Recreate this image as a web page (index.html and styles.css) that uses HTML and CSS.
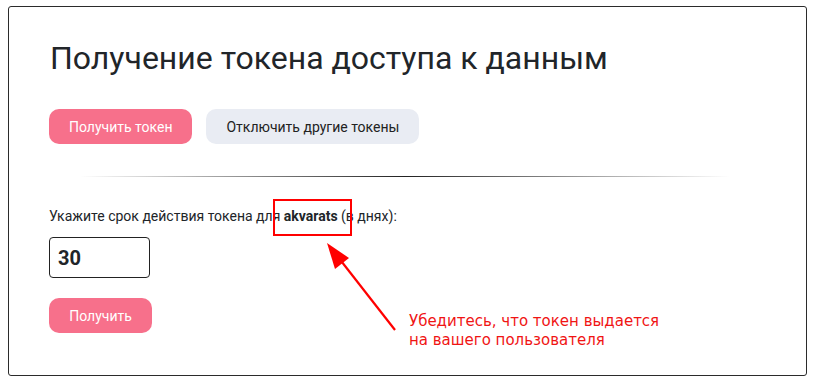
FILE: index.html
```html
<!DOCTYPE html>
<html lang="ru">
<head>
  <meta charset="UTF-8">
  <meta name="viewport" content="width=device-width, initial-scale=1.0">
  <title>Получение токена</title>
  <link rel="stylesheet" href="styles.css">
</head>
<body>
  <div class="card">
    <h1 class="title">Получение токена доступа к данным</h1>

    <div class="actions">
      <button class="btn btn-primary">Получить токен</button>
      <button class="btn btn-light">Отключить другие токены</button>
    </div>

    <hr class="divider">

    <form class="token-form">
      <label class="hint" for="days">Укажите срок действия токена для <b>akvarats</b> (в днях):</label>
      <input id="days" class="days-input" type="text" value="30">
      <button class="btn btn-primary btn-small" type="button">Получить</button>
    </form>

    <div class="mark-box"></div>
    <svg class="mark-arrow" width="90" height="100" viewBox="0 0 90 100">
      <line x1="83" y1="97" x2="26" y2="24" stroke="#ff0000" stroke-width="2.2"/>
      <polygon points="15,10 37,25 23,36" fill="#ff0000"/>
    </svg>
    <div class="mark-note">
      <div>Убедитесь, что токен выдается</div>
      <div>на вашего пользователя</div>
    </div>
  </div>
</body>
</html>
```

FILE: styles.css
```css
* {
  margin: 0;
  padding: 0;
  box-sizing: border-box;
}

body {
  margin: 6px 8px;
  font-family: Roboto, "Liberation Sans", sans-serif;
  color: #212529;
  background: #fff;
}

.card {
  position: relative;
  height: 370px;
  border: 1px solid #2b2b2b;
  border-radius: 3px;
  padding: 31px 40px 40px 40px;
}

.title {
  font-size: 32px;
  font-weight: 400;
  line-height: 40px;
  margin-left: 1px;
}

.actions {
  display: flex;
  gap: 14px;
  margin-top: 31px;
}

.btn {
  border: none;
  border-radius: 10px;
  height: 35px;
  padding: 0 20px;
  font-family: Roboto, "Liberation Sans", sans-serif;
  font-size: 14px;
  cursor: pointer;
}

.btn-primary {
  background-color: #f7708b;
  color: #fff;
}

.btn-light {
  background-color: #e9ecf3;
  color: #222;
}

.btn-small {
  width: 103px;
  margin-top: 20px;
}

.divider {
  border: none;
  height: 1px;
  margin: 32px 36px 0 31px;
  background: linear-gradient(to right, rgba(0,0,0,0), #222 50%, rgba(0,0,0,0));
}

.token-form {
  display: flex;
  flex-direction: column;
  align-items: flex-start;
  margin-top: 29px;
}

.hint {
  font-size: 14px;
  line-height: 20px;
}

.hint b {
  font-weight: 700;
}

.days-input {
  width: 101px;
  height: 41px;
  margin-top: 11px;
  border: 1px solid #222;
  border-radius: 4px;
  padding: 0 8px;
  font-family: Roboto, "Liberation Sans", sans-serif;
  font-size: 20px;
  font-weight: 700;
  color: #212529;
}

.mark-box {
  position: absolute;
  left: 264px;
  top: 192px;
  width: 79px;
  height: 37px;
  border: 2px solid #ff0000;
}

.mark-arrow {
  position: absolute;
  left: 303px;
  top: 226px;
}

.mark-note {
  position: absolute;
  left: 400px;
  top: 305px;
  font-family: "DejaVu Sans", "Noto Sans", sans-serif;
  font-size: 15px;
  line-height: 19px;
  color: #f01414;
}
```
